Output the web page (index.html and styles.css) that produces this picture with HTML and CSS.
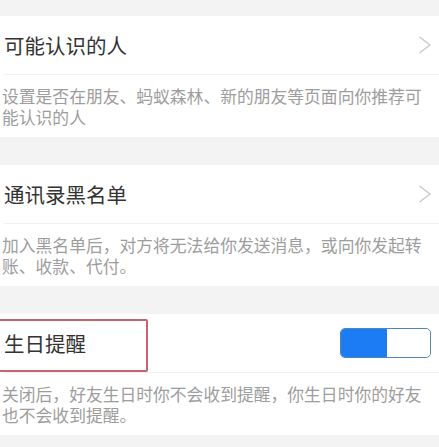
FILE: index.html
```
<!DOCTYPE html>
<html lang="zh">
<head>
<meta charset="utf-8">
<link rel="stylesheet" href="styles.css">
</head>
<body>
<div class="page">
  <section class="group">
    <div class="row">
      <span class="title">可能认识的人</span>
      <svg class="chev" width="14" height="18" viewBox="0 0 14 18"><polyline points="1.5,1 12,9 1.5,17" fill="none" stroke="#c9c9c9" stroke-width="1.4"/></svg>
    </div>
    <p class="desc">设置是否在朋友、蚂蚁森林、新的朋友等页面向你推荐可能认识的人</p>
  </section>
  <section class="group">
    <div class="row">
      <span class="title">通讯录黑名单</span>
      <svg class="chev" width="14" height="18" viewBox="0 0 14 18"><polyline points="1.5,1 12,9 1.5,17" fill="none" stroke="#c9c9c9" stroke-width="1.4"/></svg>
    </div>
    <p class="desc">加入黑名单后，对方将无法给你发送消息，或向你发起转账、收款、代付。</p>
  </section>
  <section class="group">
    <div class="row">
      <span class="title">生日提醒</span>
      <div class="toggle"><span class="on"></span><span class="knob"></span></div>
      <div class="mark"></div>
    </div>
    <p class="desc">关闭后，好友生日时你不会收到提醒，你生日时你的好友也不会收到提醒。</p>
  </section>
</div>
</body>
</html>
```
FILE: styles.css
```
html, body {
  margin: 0;
  padding: 0;
  background: #f3f3f3;
}
.page {
  width: 439px;
  height: 447px;
  padding-top: 16px;
  box-sizing: border-box;
  display: flex;
  flex-direction: column;
  gap: 28px;
  font-family: "Noto Sans CJK SC", "Noto Sans", sans-serif;
  overflow: hidden;
}
.group {
  background: #fff;
  height: 121px;
  display: flex;
  flex-direction: column;
}
.row {
  position: relative;
  height: 58px;
  display: flex;
  align-items: center;
  justify-content: space-between;
  padding: 0 7px 0 0;
  margin-left: 4px;
  border-bottom: 1px solid #f1f1f1;
}
.title {
  font-size: 20.5px;
  color: #333;
  line-height: 1;
}
.chev {
  display: block;
}
.desc {
  margin: 0;
  padding: 11px 10px 0 2px;
  font-size: 16.8px;
  line-height: 21px;
  color: #9d9d9d;
}
.toggle {
  display: flex;
  width: 91px;
  height: 30px;
  border-radius: 5px;
  overflow: hidden;
  margin-right: 1px;
  box-sizing: border-box;
  border: 1px solid #4f86b8;
}
.toggle .on {
  flex: 0 0 46px;
  background: #1b7cf4;
}
.toggle .knob {
  flex: 1;
  background: #fff;
  border-radius: 4px;
}
.mark {
  position: absolute;
  left: -7px;
  top: 5px;
  width: 147px;
  height: 49px;
  border: 2px solid #c6646b;
  border-radius: 2px;
}
```
